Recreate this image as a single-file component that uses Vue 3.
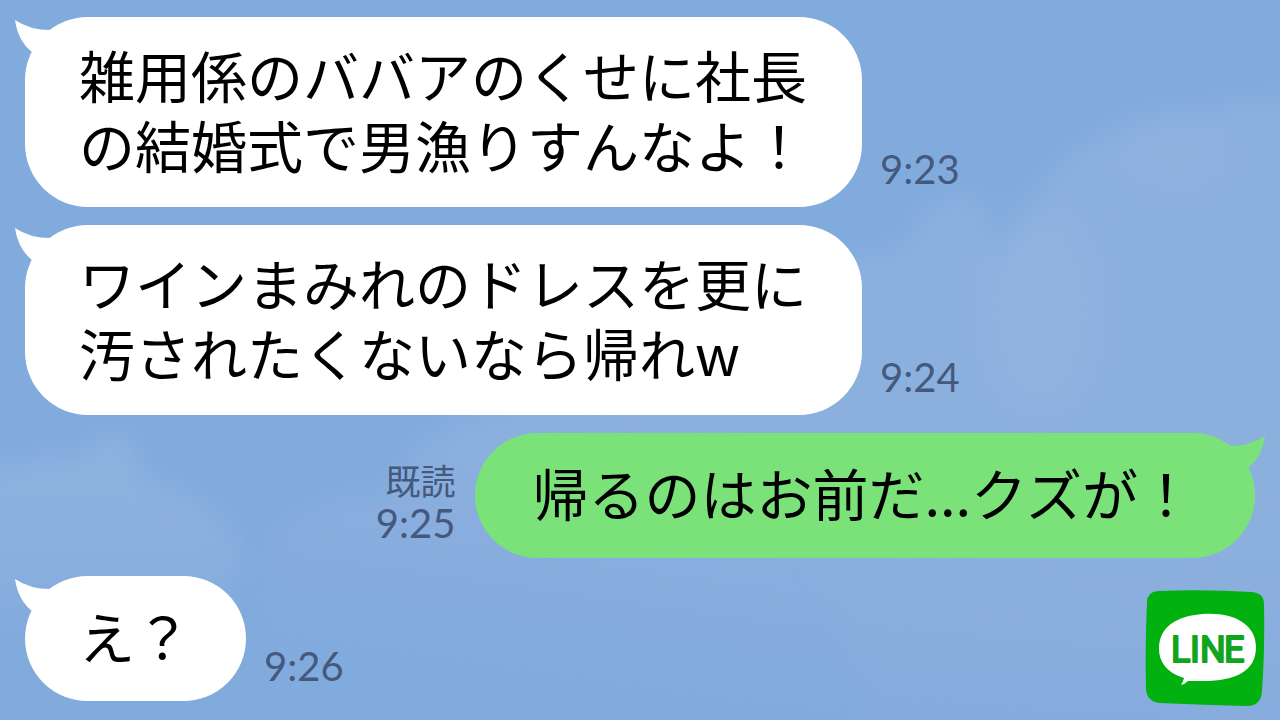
<script setup>
const messages = [
  { id: 1, side: 'received', lines: ['雑用係のババアのくせに社長', 'の結婚式で男漁りすんなよ！'], time: '9:23' },
  { id: 2, side: 'received', lines: ['ワインまみれのドレスを更に', '汚されたくないなら帰れw'], time: '9:24' },
  { id: 3, side: 'sent', lines: ['帰るのはお前だ...クズが！'], time: '9:25', read: true },
  { id: 4, side: 'received', lines: ['え？'], time: '9:26' },
]
</script>

<template>
  <main class="chat">
    <svg class="sky" viewBox="0 0 1280 720" preserveAspectRatio="xMidYMid slice" aria-hidden="true">
      <defs>
        <filter id="soft" x="-10%" y="-10%" width="120%" height="120%"><feGaussianBlur stdDeviation="11" /></filter>
        <filter id="haze" x="-100%" y="-100%" width="300%" height="300%"><feGaussianBlur stdDeviation="26" /></filter>
        <linearGradient id="fade" x1="0" y1="0" x2="0" y2="1">
          <stop offset="0" stop-color="#8fb3df" />
          <stop offset="0.45" stop-color="#8cb0de" />
          <stop offset="0.9" stop-color="#8cb0de" stop-opacity="0" />
        </linearGradient>
        <linearGradient id="fade-long" gradientUnits="userSpaceOnUse" x1="640" y1="420" x2="600" y2="700">
          <stop offset="0" stop-color="#8db1de" />
          <stop offset="0.5" stop-color="#8aaede" stop-opacity="0.8" />
          <stop offset="1" stop-color="#86abdc" stop-opacity="0" />
        </linearGradient>
        <linearGradient id="fade-right" gradientUnits="userSpaceOnUse" x1="0" y1="120" x2="0" y2="740">
          <stop offset="0" stop-color="#8cb0de" />
          <stop offset="0.55" stop-color="#8cb0de" />
          <stop offset="1" stop-color="#89acdc" stop-opacity="0.35" />
        </linearGradient>
      </defs>
      <path d="M258 570 Q285 515 320 508 Q350 494 384 500 Q410 450 455 425 Q600 380 860 400 L1400 430 V800 H200 Q290 620 258 570Z" fill="url(#fade-long)" filter="url(#soft)" />
      <path d="M700 300 Q870 255 905 250 Q925 200 965 198 Q990 202 985 232 L1002 258 Q1015 215 1042 200 Q1050 160 1105 138 Q1160 105 1400 92 V900 H900 Q850 500 700 400Z" fill="url(#fade-right)" filter="url(#soft)" />
      <path d="M-60 495 Q20 458 60 460 Q92 460 100 443 Q118 430 131 448 Q132 470 150 482 Q200 495 225 530 Q250 560 236 575 L200 650 H-60Z" fill="url(#fade)" filter="url(#soft)" />
      <ellipse cx="1175" cy="155" rx="55" ry="22" fill="#98b7e3" opacity="0.45" filter="url(#haze)" />
      <ellipse cx="1040" cy="310" rx="50" ry="100" fill="#98b7e3" opacity="0.45" filter="url(#haze)" />
    </svg>

    <article v-for="m in messages" :key="m.id" class="message" :class="[m.side, { tall: m.lines.length > 1 }]">
      <div class="bubble">
        <svg class="tail" viewBox="0 0 40 38" aria-hidden="true">
          <path d="M0 3 Q15 13 35 13 L40 30 L17 35 Q3 24 0 3Z" fill="currentColor" />
        </svg>
        <p class="text"><span v-for="line in m.lines" :key="line" class="line">{{ line }}</span></p>
      </div>
      <div class="meta">
        <span v-if="m.read" class="read">既読</span>
        <time class="time">{{ m.time }}</time>
      </div>
    </article>

    <svg class="logo" viewBox="0 0 120 118" role="img" aria-label="LINE">
      <path d="M13 2 Q60 0 107 3 Q119 4 119 15 Q120 60 117 102 Q116 117 102 117 Q58 116 15 114 Q2 113 1 100 Q0 60 2 13 Q2 3 13 2Z" fill="#00b10f" />
      <path d="M58 25 C90 23 111 36 111 58 C111 82 91 92 58 92 Q50 92 43 92 Q40 95 36 96 Q38 93 39 89 C22 84 14 73 14 60 C14 38 31 27 58 25Z" fill="#fff" />
      <text class="logo-text" x="26 45 55 79" y="73">LINE</text>
    </svg>
  </main>
</template>

<style>
body {
  margin: 0;
}
</style>

<style scoped>
.chat {
  position: relative;
  box-sizing: border-box;
  min-height: 100vh;
  padding: 17px 25px 19px;
  display: flex;
  flex-direction: column;
  gap: 18px;
  overflow: hidden;
  background: #82abdd;
  font-family: "Noto Sans CJK JP", sans-serif;
}

.sky {
  position: absolute;
  inset: 0;
  width: 100%;
  height: 100%;
}

.message {
  position: relative;
  display: flex;
  align-items: flex-end;
  gap: 18px;
}

.sent {
  flex-direction: row-reverse;
  gap: 20px;
}

.bubble {
  position: relative;
  padding: 24px 55px 31px 54px;
  border-radius: 63px;
  background: #fff;
  color: #fff;
}

.tall .bubble {
  padding-top: 22px;
  padding-bottom: 28px;
}

.sent .bubble {
  padding-left: 57px;
  padding-right: 61px;
  background: #7be27a;
  color: #7be27a;
}

.tail {
  position: absolute;
  top: 0;
  left: -10px;
  width: 40px;
  height: 38px;
}

.sent .tail {
  left: auto;
  right: -10px;
  transform: scaleX(-1);
}

.text {
  margin: 0;
  color: #000;
  font-size: 56px;
  line-height: 70px;
}

.line {
  display: block;
}

.meta {
  display: flex;
  flex-direction: column;
  align-items: flex-end;
  padding-bottom: 14px;
  color: #44597d;
}

.tall .meta {
  padding-bottom: 17px;
}

.read {
  font-size: 35px;
  line-height: 44px;
}

.time {
  font-family: Lato, sans-serif;
  font-size: 40px;
  line-height: 42px;
}

.logo {
  position: absolute;
  right: 15px;
  bottom: 13px;
  width: 120px;
  height: 118px;
}

.logo-text {
  font-family: Roboto, sans-serif;
  font-size: 36px;
  fill: #11a51f;
  stroke: #11a51f;
  stroke-width: 2;
  stroke-linejoin: round;
}
</style>
